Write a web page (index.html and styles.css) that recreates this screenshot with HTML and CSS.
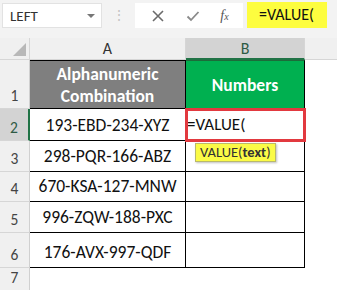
FILE: index.html
```html
<!DOCTYPE html>
<html>
<head>
  <title>VALUE formula</title>
  <link rel="stylesheet" href="styles.css">
</head>
<body>
  <div class="toolbar">
    <div class="namebox">
      <span>LEFT</span>
      <span class="arrow"></span>
    </div>
    <div class="dots">&#8942;</div>
    <div class="buttons">
      <svg class="btn" width="14" height="14" viewBox="0 0 14 14">
        <path d="M2 2 L12 12 M12 2 L2 12" stroke="#6b6b6b" stroke-width="1.6" fill="none"/>
      </svg>
      <svg class="btn" width="14" height="14" viewBox="0 0 14 14">
        <path d="M1.5 7.5 L5 11 L12.5 3" stroke="#8a8a8a" stroke-width="1.8" fill="none"/>
      </svg>
      <span class="fx">f<sub>x</sub></span>
    </div>
    <div class="formula">=VALUE(</div>
  </div>

  <div class="sheet">
    <div class="corner"><span class="tri"></span></div>
    <div class="colhead">A</div>
    <div class="colhead sel">B</div>
    <div class="colhead rest"></div>

    <div class="rowhead">1</div>
    <div class="cell head-gray">Alphanumeric<br>Combination</div>
    <div class="cell head-green">Numbers</div>
    <div class="blank"></div>

    <div class="rowhead sel">2</div>
    <div class="cell">193-EBD-234-XYZ</div>
    <div class="cell editing">
      <span class="edit-text">=VALUE(</span>
      <div class="tip">VALUE(<b>text</b>)</div>
    </div>
    <div class="blank"></div>

    <div class="rowhead">3</div>
    <div class="cell">298-PQR-166-ABZ</div>
    <div class="cell"></div>
    <div class="blank"></div>

    <div class="rowhead">4</div>
    <div class="cell">670-KSA-127-MNW</div>
    <div class="cell"></div>
    <div class="blank"></div>

    <div class="rowhead">5</div>
    <div class="cell">996-ZQW-188-PXC</div>
    <div class="cell"></div>
    <div class="blank"></div>

    <div class="rowhead">6</div>
    <div class="cell">176-AVX-997-QDF</div>
    <div class="cell"></div>
    <div class="blank"></div>

    <div class="rowhead last">7</div>
    <div class="blank"></div>
    <div class="blank"></div>
    <div class="blank"></div>
  </div>
</body>
</html>
```

FILE: styles.css
```css
body {
  margin: 0;
  width: 337px;
  height: 290px;
  overflow: hidden;
  background: #fff;
  font-family: "Carlito", "Lato", sans-serif;
}

/* formula bar */
.toolbar {
  display: flex;
  align-items: flex-start;
  height: 38px;
  padding: 3px 0 0 2px;
  box-sizing: border-box;
  background: #f3f3f3;
}

.namebox {
  width: 100px;
  height: 25px;
  box-sizing: border-box;
  background: #fff;
  border: 1px solid #e2e2e2;
  display: flex;
  align-items: center;
  justify-content: space-between;
  padding: 0 6px 0 7px;
  font-size: 15px;
  color: #333;
}

.arrow {
  width: 0;
  height: 0;
  border-left: 4px solid transparent;
  border-right: 4px solid transparent;
  border-top: 4px solid #777;
}

.dots {
  width: 33px;
  text-align: center;
  line-height: 25px;
  color: #c4c4c4;
  font-size: 14px;
}

.buttons {
  width: 108px;
  height: 25px;
  background: #fff;
  display: flex;
  align-items: center;
  justify-content: space-around;
  padding: 0 4px 0 6px;
  box-sizing: border-box;
}

.fx {
  font-family: "Liberation Serif", serif;
  font-style: italic;
  font-size: 14px;
  color: #555;
}

.fx sub {
  font-size: 10px;
  vertical-align: 0;
}

.formula {
  margin-left: 4px;
  width: 80px;
  height: 26px;
  margin-top: -1px;
  background: #fdfd3f;
  font-size: 16px;
  line-height: 26px;
  padding-left: 12px;
  box-sizing: border-box;
  color: #111;
}

/* grid */
.sheet {
  display: grid;
  grid-template-columns: 30px 156px 119px 1fr;
  grid-template-rows: 22px 49px 32px 31px 30px 31px 35px 1fr;
  height: 252px;
}

.corner {
  background: #f0f0f0;
  border-right: 1px solid #d6d6d6;
  border-bottom: 1px solid #d6d6d6;
  position: relative;
}

.tri {
  position: absolute;
  right: 3px;
  bottom: 3px;
  width: 0;
  height: 0;
  border-left: 13px solid transparent;
  border-bottom: 13px solid #b8b8b8;
}

.colhead {
  background: #f0f0f0;
  border-right: 1px solid #d6d6d6;
  border-bottom: 1px solid #d6d6d6;
  display: flex;
  align-items: center;
  justify-content: center;
  font-size: 16px;
  color: #333;
}

.colhead.sel {
  background: #d3d3d3;
  color: #2e5a44;
  border-bottom: 2px solid #217346;
}

.colhead.rest {
  border-right: none;
}

.rowhead {
  background: #f0f0f0;
  border-right: 1px solid #d0d0d0;
  border-bottom: 1px solid #d6d6d6;
  display: flex;
  align-items: flex-end;
  justify-content: center;
  padding-bottom: 3px;
  font-size: 15.5px;
  color: #444;
}

.rowhead.sel {
  background: #d3d3d3;
  color: #2e5a44;
  border-right: 2px solid #217346;
}

.rowhead.last {
  border-bottom: none;
}

.cell {
  border-right: 1px solid #000;
  border-bottom: 1px solid #000;
  display: flex;
  align-items: flex-end;
  justify-content: center;
  padding-bottom: 4px;
  font-size: 17.5px;
  color: #111;
  box-sizing: border-box;
}

.head-gray,
.head-green {
  align-items: center;
  text-align: center;
  padding-bottom: 0;
  color: #fff;
  font-weight: bold;
  font-size: 17.5px;
  line-height: 22px;
  border-top: 1px solid #000;
}

.head-gray {
  background: #7f7f7f;
}

.head-green {
  background: #00b050;
  border-top-color: #1d6b3a;
}

.blank {
  background: #fff;
}

.editing {
  position: relative;
  justify-content: flex-start;
  outline: 3px solid #e2393f;
  outline-offset: -2px;
  padding-left: 1px;
  padding-bottom: 5px;
  font-size: 17px;
}

.tip {
  position: absolute;
  left: 9px;
  top: 34px;
  padding: 0 4px;
  height: 17px;
  line-height: 17px;
  background: #fbfb46;
  border: 1px solid #b9b96a;
  box-shadow: 1px 1px 2px rgba(0,0,0,0.25);
  font-size: 14.5px;
  color: #333;
  white-space: nowrap;
  z-index: 2;
}
```
